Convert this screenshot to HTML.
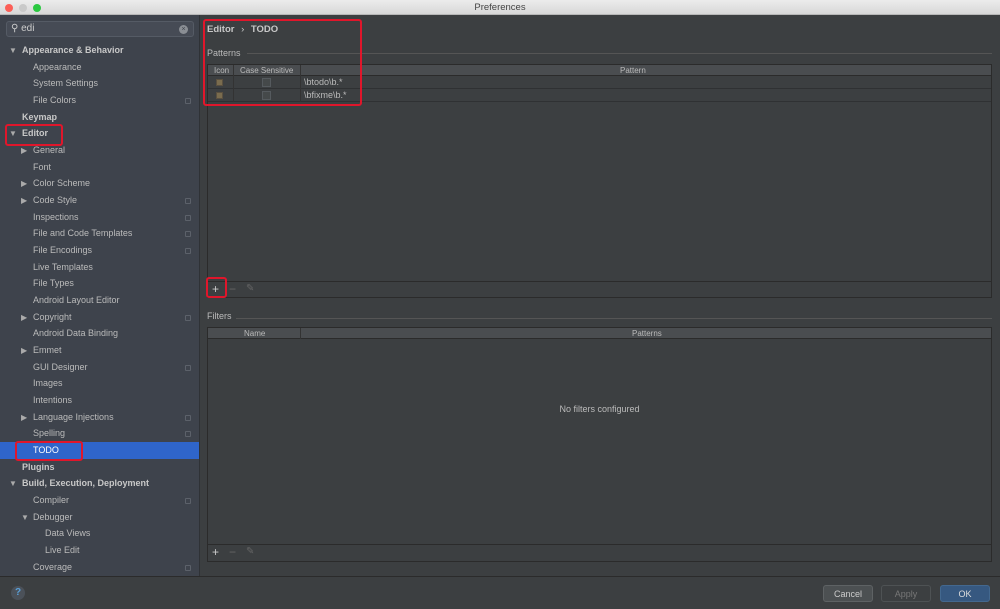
<!DOCTYPE html>
<html><head><meta charset="utf-8"><style>
*{margin:0;padding:0;box-sizing:border-box}
body{width:1000px;height:609px;overflow:hidden;background:#3c3f41;font-family:"Liberation Sans",sans-serif;font-size:9px;color:#bbbbbb;position:relative}
.a{position:absolute}
#title{left:0;top:0;width:1000px;height:15px;background:linear-gradient(#ececec,#d8d8d8);border-bottom:1px solid #b8b8b8;text-align:center;color:#444;font-size:9.5px;line-height:15px}
.dot{width:8px;height:8px;border-radius:50%;top:4px}
#side{left:0;top:15px;width:200px;height:561px;background:#3e434c;border-right:1px solid #2f3236}
.r{position:absolute;left:0;width:199px;height:16.67px;line-height:17.5px;white-space:nowrap}
.b{font-weight:bold;color:#c8c8c8}
.ar{position:absolute;font-size:8px;color:#aaa}
.ic{position:absolute;left:185px;top:6px;width:6px;height:6px;border:1px solid #5c616a;border-radius:1px}
.sel{background:#2f65ca;color:#fff}
.red{position:absolute;border:2px solid #e0162b;border-radius:3px}
.tb{position:absolute;border:1px solid #2b2b2b;background:#3c3f41}
.hd{background:#4a4d50;height:11px;border-bottom:1px solid #2b2b2b}
.btn{position:absolute;top:585px;width:50px;height:17px;border-radius:3px;text-align:center;line-height:17px;font-size:9px}
</style></head><body>
<div id="title" class="a">Preferences</div>
<div class="a dot" style="left:5px;background:#fc5f57"></div>
<div class="a dot" style="left:19px;background:#c9c9c9"></div>
<div class="a dot" style="left:33px;background:#2ac840"></div>
<div id="side" class="a">
<div class="a" style="left:6px;top:6px;width:188px;height:16px;background:#464b55;border:1px solid #555b65;border-radius:3px"></div>
<div class="a" style="left:11px;top:8px;font-size:10px;color:#ccc">⚲ edi</div>
<div class="a" style="left:179px;top:10px;width:9px;height:9px;border-radius:50%;background:#8a8e94;color:#3e434c;font-size:7px;line-height:9px;text-align:center">×</div>
</div>
<div class="a" style="left:0;top:42px;width:199px">
<div class="r b" style="top:0"><span class="ar" style="left:9px">▼</span><span style="position:absolute;left:22px">Appearance &amp; Behavior</span></div>
<div class="r" style="top:16.67px"><span style="position:absolute;left:33px">Appearance</span></div>
<div class="r" style="top:33.33px"><span style="position:absolute;left:33px">System Settings</span></div>
<div class="r" style="top:50px"><span style="position:absolute;left:33px">File Colors</span><i class="ic"></i></div>
<div class="r b" style="top:66.67px"><span style="position:absolute;left:22px">Keymap</span></div>
<div class="r b" style="top:83.33px"><span class="ar" style="left:9px">▼</span><span style="position:absolute;left:22px">Editor</span></div>
<div class="r" style="top:100px"><span class="ar" style="left:21px">▶</span><span style="position:absolute;left:33px">General</span></div>
<div class="r" style="top:116.67px"><span style="position:absolute;left:33px">Font</span></div>
<div class="r" style="top:133.33px"><span class="ar" style="left:21px">▶</span><span style="position:absolute;left:33px">Color Scheme</span></div>
<div class="r" style="top:150px"><span class="ar" style="left:21px">▶</span><span style="position:absolute;left:33px">Code Style</span><i class="ic"></i></div>
<div class="r" style="top:166.67px"><span style="position:absolute;left:33px">Inspections</span><i class="ic"></i></div>
<div class="r" style="top:183.33px"><span style="position:absolute;left:33px">File and Code Templates</span><i class="ic"></i></div>
<div class="r" style="top:200px"><span style="position:absolute;left:33px">File Encodings</span><i class="ic"></i></div>
<div class="r" style="top:216.67px"><span style="position:absolute;left:33px">Live Templates</span></div>
<div class="r" style="top:233.33px"><span style="position:absolute;left:33px">File Types</span></div>
<div class="r" style="top:250px"><span style="position:absolute;left:33px">Android Layout Editor</span></div>
<div class="r" style="top:266.67px"><span class="ar" style="left:21px">▶</span><span style="position:absolute;left:33px">Copyright</span><i class="ic"></i></div>
<div class="r" style="top:283.33px"><span style="position:absolute;left:33px">Android Data Binding</span></div>
<div class="r" style="top:300px"><span class="ar" style="left:21px">▶</span><span style="position:absolute;left:33px">Emmet</span></div>
<div class="r" style="top:316.67px"><span style="position:absolute;left:33px">GUI Designer</span><i class="ic"></i></div>
<div class="r" style="top:333.33px"><span style="position:absolute;left:33px">Images</span></div>
<div class="r" style="top:350px"><span style="position:absolute;left:33px">Intentions</span></div>
<div class="r" style="top:366.67px"><span class="ar" style="left:21px">▶</span><span style="position:absolute;left:33px">Language Injections</span><i class="ic"></i></div>
<div class="r" style="top:383.33px"><span style="position:absolute;left:33px">Spelling</span><i class="ic"></i></div>
<div class="r sel" style="top:400px"><span style="position:absolute;left:33px">TODO</span></div>
<div class="r b" style="top:416.67px"><span style="position:absolute;left:22px">Plugins</span></div>
<div class="r b" style="top:433.33px"><span class="ar" style="left:9px">▼</span><span style="position:absolute;left:22px">Build, Execution, Deployment</span></div>
<div class="r" style="top:450px"><span style="position:absolute;left:33px">Compiler</span><i class="ic"></i></div>
<div class="r" style="top:466.67px"><span class="ar" style="left:21px">▼</span><span style="position:absolute;left:33px">Debugger</span></div>
<div class="r" style="top:483.33px"><span style="position:absolute;left:45px">Data Views</span></div>
<div class="r" style="top:500px"><span style="position:absolute;left:45px">Live Edit</span></div>
<div class="r" style="top:516.67px"><span style="position:absolute;left:33px">Coverage</span><i class="ic"></i></div>
</div>

<div class="a b" style="left:207px;top:24px;font-size:9.5px">Editor <span style="font-weight:normal;margin:0 4px">›</span> TODO</div>
<div class="a" style="left:207px;top:48px">Patterns</div>
<div class="a" style="left:247px;top:53px;width:745px;height:1px;background:#555"></div>
<div class="tb" style="left:207px;top:64px;width:785px;height:234px">
<div class="hd" style="position:relative;font-size:8px;line-height:11px">
<span class="a" style="left:6px">Icon</span><span class="a" style="left:25px;top:0;width:1px;height:11px;background:#333"></span>
<span class="a" style="left:32px">Case Sensitive</span><span class="a" style="left:92px;top:0;width:1px;height:11px;background:#333"></span>
<span class="a" style="left:412px">Pattern</span></div>
<div style="position:relative;height:13px;border-bottom:1px solid #2f3133"><i class="a" style="left:8px;top:3px;width:7px;height:7px;background:#7a6c4e;border:1px solid #5a5040"></i><i class="a" style="left:54px;top:2px;width:9px;height:9px;border:1px solid #555a5e;background:#45494a"></i><span class="a" style="left:25px;top:0;width:1px;height:13px;background:#333"></span><span class="a" style="left:92px;top:0;width:1px;height:13px;background:#333"></span><span class="a" style="left:96px;top:1px">\btodo\b.*</span></div>
<div style="position:relative;height:13px;border-bottom:1px solid #2f3133"><i class="a" style="left:8px;top:3px;width:7px;height:7px;background:#7a6c4e;border:1px solid #5a5040"></i><i class="a" style="left:54px;top:2px;width:9px;height:9px;border:1px solid #555a5e;background:#45494a"></i><span class="a" style="left:25px;top:0;width:1px;height:13px;background:#333"></span><span class="a" style="left:92px;top:0;width:1px;height:13px;background:#333"></span><span class="a" style="left:96px;top:1px">\bfixme\b.*</span></div>
<div class="a" style="left:0;top:216px;width:783px;height:1px;background:#2b2b2b"></div>
<div class="a" style="left:4px;top:217px;font-size:12px;color:#ccc">+</div>
<div class="a" style="left:21px;top:217px;font-size:12px;color:#666">−</div>
<div class="a" style="left:38px;top:218px;font-size:10px;color:#666">✎</div>
</div>
<div class="a" style="left:207px;top:311px">Filters</div>
<div class="a" style="left:236px;top:318px;width:756px;height:1px;background:#555"></div>
<div class="tb" style="left:207px;top:327px;width:785px;height:235px">
<div class="hd" style="position:relative;font-size:8px;line-height:11px"><span class="a" style="left:36px">Name</span><span class="a" style="left:92px;top:0;width:1px;height:11px;background:#333"></span><span class="a" style="left:424px">Patterns</span></div>
<div class="a" style="left:0;top:76px;width:783px;text-align:center">No filters configured</div>
<div class="a" style="left:0;top:216px;width:783px;height:1px;background:#2b2b2b"></div>
<div class="a" style="left:4px;top:217px;font-size:12px;color:#ccc">+</div>
<div class="a" style="left:21px;top:217px;font-size:12px;color:#666">−</div>
<div class="a" style="left:38px;top:218px;font-size:10px;color:#666">✎</div>
</div>

<div class="a" style="left:0;top:576px;width:1000px;height:33px;background:#3c3f41;border-top:1px solid #2b2b2b"></div>
<div class="a" style="left:11px;top:586px;width:14px;height:14px;border-radius:50%;background:#4b5159;color:#5aa0d8;font-size:10px;text-align:center;line-height:14px;font-weight:bold">?</div>
<div class="btn" style="left:823px;background:#4c5052;border:1px solid #5e6264;color:#ccc">Cancel</div>
<div class="btn" style="left:881px;background:#3c3f41;border:1px solid #4e5254;color:#777">Apply</div>
<div class="btn" style="left:940px;background:#365880;border:1px solid #43688f;color:#ddd">OK</div>

<div class="red" style="left:203px;top:19px;width:159px;height:87px"></div>
<div class="red" style="left:5px;top:124px;width:58px;height:22px"></div>
<div class="red" style="left:15px;top:441px;width:68px;height:20px"></div>
<div class="red" style="left:206px;top:277px;width:21px;height:21px"></div>
</body></html>
